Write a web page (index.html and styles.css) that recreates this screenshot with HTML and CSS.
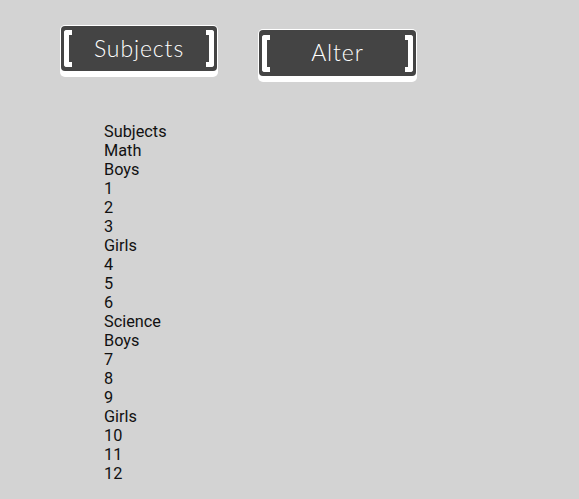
FILE: index.html
```html
<!DOCTYPE html>
<html lang="en">
<head>
    <meta charset="UTF-8">
    <meta name="viewport" content="width=device-width, initial-scale=1.0">
    <title>Subjects</title>
    <link rel="stylesheet" href="styles.css">
</head>
<body>
    <div class="toolbar">
        <button class="chalk-button">
            <span class="face">
                <span class="bracket left"></span>
                <span class="label">Subjects</span>
                <span class="bracket right"></span>
            </span>
        </button>
        <button class="chalk-button lower">
            <span class="face">
                <span class="bracket left"></span>
                <span class="label">Alter</span>
                <span class="bracket right"></span>
            </span>
        </button>
    </div>

    <ul class="tree">
        <li>Subjects</li>
        <li>Math</li>
        <li>Boys</li>
        <li>1</li>
        <li>2</li>
        <li>3</li>
        <li>Girls</li>
        <li>4</li>
        <li>5</li>
        <li>6</li>
        <li>Science</li>
        <li>Boys</li>
        <li>7</li>
        <li>8</li>
        <li>9</li>
        <li>Girls</li>
        <li>10</li>
        <li>11</li>
        <li>12</li>
    </ul>
</body>
</html>
```

FILE: styles.css
```css
body {
    margin: 0;
    min-height: 499px;
    background-color: #d3d3d3;
    font-family: Roboto, sans-serif;
    color: #111;
    overflow: hidden;
}

.toolbar {
    display: flex;
    align-items: flex-start;
    gap: 40px;
    padding: 25px 0 0 60px;
}

.chalk-button {
    display: block;
    width: 158px;
    height: 52px;
    padding: 1px 1px 6px;
    border: none;
    border-radius: 5px;
    background: #fff;
}

.chalk-button.lower {
    width: 159px;
    height: 53px;
    margin-top: 4px;
}

.face {
    display: flex;
    justify-content: space-between;
    align-items: center;
    height: 100%;
    padding: 0 3px;
    box-sizing: border-box;
    border-radius: 4px;
    background: #444;
}

.label {
    padding-bottom: 2px;
    font-family: "Lato", sans-serif;
    font-weight: 300;
    font-size: 23px;
    letter-spacing: 0.9px;
    color: #fff;
}

.bracket {
    width: 8px;
    height: 37px;
    box-sizing: border-box;
    border-top: 5px solid #fff;
    border-bottom: 5px solid #fff;
}

.bracket.left {
    border-left: 5px solid #fff;
    border-radius: 3px 0 0 3px;
}

.bracket.right {
    border-right: 5px solid #fff;
    border-radius: 0 3px 3px 0;
}

.tree {
    list-style: none;
    margin: 0;
    padding: 40px 0 0 104px;
    font-size: 16.3px;
    line-height: 19px;
}
```
